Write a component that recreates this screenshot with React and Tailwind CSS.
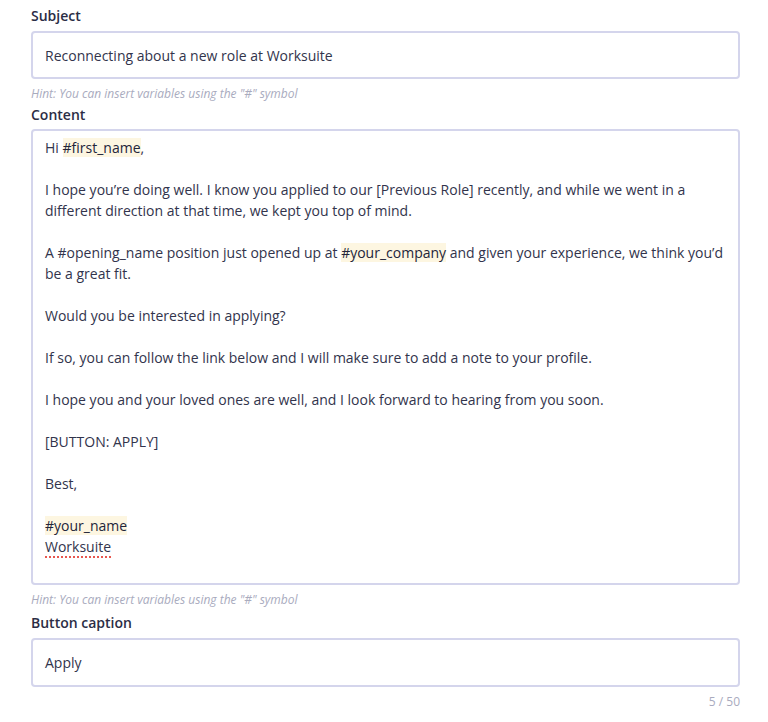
import React from "react";

const font = { fontFamily: '"Open Sans", "Noto Sans", sans-serif' };

function Tag({ children }) {
  return <span className="bg-[#fdf6e1] text-[#23253a]">{children}</span>;
}

function Label({ children }) {
  return (
    <div className="text-[14px] leading-[20px] font-semibold text-[#2b2d45]">
      {children}
    </div>
  );
}

function Hint() {
  return (
    <div className="text-[12px] leading-[16px] italic text-[#a9abbe]">
      Hint: You can insert variables using the "#" symbol
    </div>
  );
}

export default function App() {
  return (
    <div
      className="w-[768px] h-[722px] bg-white pl-[31px] pr-[28px] pt-[6px] text-[#32344c]"
      style={font}
    >
      <Label>Subject</Label>
      <div className="mt-[5px] h-[48px] border-2 border-[#d4d5ec] rounded-[4px] flex items-center pl-[12px] text-[14px]">
        Reconnecting about a new role at Worksuite
      </div>
      <div className="mt-[7px]">
        <Hint />
      </div>
      <div className="mt-[3px]">
        <Label>Content</Label>
      </div>
      <div className="mt-[4px] h-[456px] border-2 border-[#d4d5ec] rounded-[4px] pl-[12px] pr-[12px] pt-[6px] text-[14px] leading-[21px]">
        <p>
          Hi <Tag>#first_name</Tag>,
        </p>
        <p className="mt-[21px]">
          I hope you’re doing well. I know you applied to our [Previous Role] recently, and while we went in a
          <br />
          different direction at that time, we kept you top of mind.
        </p>
        <p className="mt-[21px]">
          A #opening_name position just opened up at <Tag>#your_company</Tag> and given your experience, we think you’d
          <br />
          be a great fit.
        </p>
        <p className="mt-[21px]">Would you be interested in applying?</p>
        <p className="mt-[21px]">
          If so, you can follow the link below and I will make sure to add a note to your profile.
        </p>
        <p className="mt-[21px]">
          I hope you and your loved ones are well, and I look forward to hearing from you soon.
        </p>
        <p className="mt-[21px]">[BUTTON: APPLY]</p>
        <p className="mt-[21px]">Best,</p>
        <p className="mt-[21px]">
          <Tag>#your_name</Tag>
        </p>
        <p>
          <span className="underline decoration-dotted decoration-[#e8574f] decoration-[1.5px] underline-offset-[4px]">
            Worksuite
          </span>
        </p>
      </div>
      <div className="mt-[7px]">
        <Hint />
      </div>
      <div className="mt-[5px]">
        <Label>Button caption</Label>
      </div>
      <div className="mt-[5px] h-[49px] border-2 border-[#d4d5ec] rounded-[4px] flex items-center pl-[12px] text-[14px]">
        Apply
      </div>
      <div className="mt-[7px] text-right text-[12px] leading-[16px] text-[#a9abbe]">
        5 / 50
      </div>
    </div>
  );
}
